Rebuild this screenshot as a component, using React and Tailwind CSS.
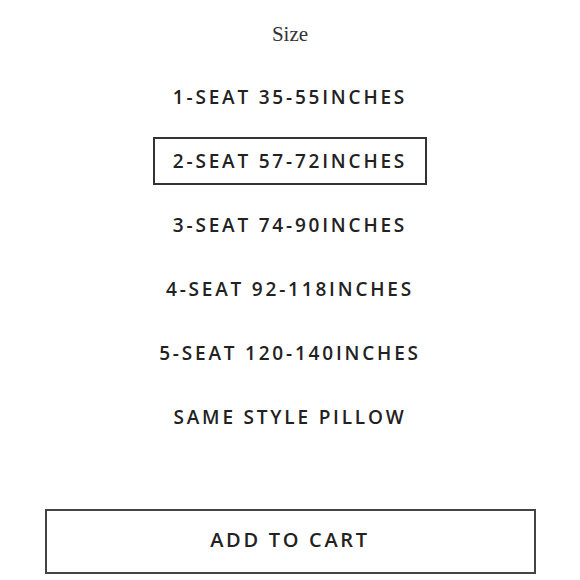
const sizes = [
  "1-SEAT 35-55INCHES",
  "2-SEAT 57-72INCHES",
  "3-SEAT 74-90INCHES",
  "4-SEAT 92-118INCHES",
  "5-SEAT 120-140INCHES",
  "SAME STYLE PILLOW",
];

export default function App() {
  const selected = 1;
  return (
    <div className="w-[580px] h-[580px] bg-white flex flex-col items-center overflow-hidden">
      <h2 className="mt-[21px] h-[28px] flex items-center text-[21px] text-[#333] font-['Liberation_Serif',serif]">
        Size
      </h2>
      <div className="mt-[24px] flex flex-col items-center gap-[16px]">
        {sizes.map((s, i) => (
          <button
            key={s}
            className={`h-[48px] px-[16px] flex items-center justify-center text-[19px] font-semibold tracking-[2.8px] text-[#222] font-['Open_Sans',sans-serif] ${
              i === selected ? "w-[274px] border-2 border-[#333]" : ""
            }`}
          >
            {s}
          </button>
        ))}
      </div>
      <button className="mt-[68px] w-[491px] h-[65px] pb-[3px] border-2 border-[#444] flex items-center justify-center text-[20px] font-semibold tracking-[2.7px] text-[#222] font-['Open_Sans',sans-serif]">
        ADD TO CART
      </button>
    </div>
  );
}
